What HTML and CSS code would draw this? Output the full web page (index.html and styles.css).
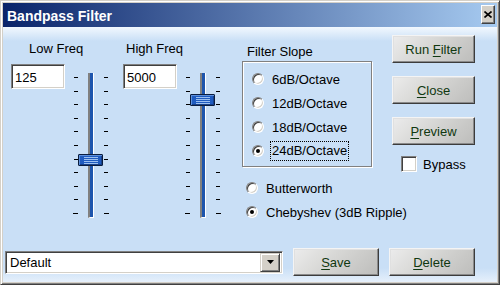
FILE: index.html
```html
<!DOCTYPE html>
<html lang="en">

<head>
    <meta charset="UTF-8">
    <meta name="viewport" content="width=device-width, initial-scale=1.0">
    <title>Bandpass Filter</title>
    <link rel="stylesheet" href="styles.css">
</head>

<body>
    <div class="window">
        <div class="titlebar">
            <span class="title">Bandpass Filter</span>
            <button class="close-btn" type="button">
                <svg width="8" height="7" viewBox="0 0 8 7">
                    <path d="M0.5 0.5 L7.5 6.5 M7.5 0.5 L0.5 6.5" stroke="#000" stroke-width="1.6" fill="none" />
                </svg>
            </button>
        </div>

        <div class="client">
            <div class="main">
                <div class="freq">
                    <div class="freq-label freq-label-low">Low Freq</div>
                    <div class="freq-row">
                        <input class="field" type="text" value="125">
                        <div class="slider">
                            <div class="ticks ticks-left">
                                <span></span><span></span><span></span><span></span><span></span><span></span>
                                <span></span><span></span><span></span><span></span><span></span>
                            </div>
                            <div class="track"></div>
                            <div class="ticks ticks-right">
                                <span></span><span></span><span></span><span></span><span></span><span></span>
                                <span></span><span></span><span></span><span></span><span></span>
                            </div>
                            <div class="thumb" style="top: 82px"></div>
                        </div>
                    </div>
                </div>

                <div class="freq">
                    <div class="freq-label freq-label-high">High Freq</div>
                    <div class="freq-row">
                        <input class="field" type="text" value="5000">
                        <div class="slider">
                            <div class="ticks ticks-left">
                                <span></span><span></span><span></span><span></span><span></span><span></span>
                                <span></span><span></span><span></span><span></span><span></span>
                            </div>
                            <div class="track"></div>
                            <div class="ticks ticks-right">
                                <span></span><span></span><span></span><span></span><span></span><span></span>
                                <span></span><span></span><span></span><span></span><span></span>
                            </div>
                            <div class="thumb" style="top: 22px"></div>
                        </div>
                    </div>
                </div>

                <div class="slope">
                    <div class="slope-label">Filter Slope</div>
                    <div class="group">
                        <div class="option"><span class="radio"></span><span>6dB/Octave</span></div>
                        <div class="option"><span class="radio"></span><span>12dB/Octave</span></div>
                        <div class="option"><span class="radio"></span><span>18dB/Octave</span></div>
                        <div class="option"><span class="radio checked"></span><span class="focused">24dB/Octave</span></div>
                    </div>
                    <div class="types">
                        <div class="option"><span class="radio"></span><span>Butterworth</span></div>
                        <div class="option"><span class="radio checked"></span><span>Chebyshev (3dB Ripple)</span></div>
                    </div>
                </div>

                <div class="actions">
                    <button class="btn" type="button">Run <u>F</u>ilter</button>
                    <button class="btn" type="button"><u>C</u>lose</button>
                    <button class="btn" type="button"><u>P</u>review</button>
                    <label class="bypass"><span class="checkbox"></span>Bypass</label>
                </div>
            </div>

            <div class="bottom">
                <div class="combo">
                    <span class="combo-text">Default</span>
                    <span class="combo-arrow">
                        <svg width="7" height="4" viewBox="0 0 7 4">
                            <path d="M0 0 H7 L3.5 4 Z" fill="#000" />
                        </svg>
                    </span>
                </div>
                <button class="btn btn-wide" type="button"><u>S</u>ave</button>
                <button class="btn btn-wide" type="button"><u>D</u>elete</button>
            </div>
        </div>
    </div>
</body>

</html>
```

FILE: styles.css
```css
* {
    padding: 0;
    margin: 0;
    box-sizing: border-box;
    font-family: "Liberation Sans", Arial, sans-serif;
}

body {
    width: 500px;
    height: 285px;
    overflow: hidden;
    background-color: #d4d0c8;
}

.window {
    display: flex;
    flex-direction: column;
    width: 500px;
    height: 285px;
    padding: 2px;
    border: 1px solid;
    border-color: #d4d0c8 #404040 #404040 #d4d0c8;
    box-shadow: inset 1px 1px #ffffff, inset -1px -1px #808080;
    background-color: #d4d0c8;
}

.titlebar {
    display: flex;
    align-items: center;
    justify-content: space-between;
    height: 24px;
    padding: 0 2px 0 4px;
    background: linear-gradient(to right, #0a246a, #a6caf0);
}

.title {
    color: #ffffff;
    font-size: 14px;
    font-weight: 700;
    margin-top: 1px;
}

.close-btn {
    display: flex;
    align-items: center;
    justify-content: center;
    width: 14px;
    height: 19px;
    margin-top: -1px;
    border: 1px solid;
    border-color: #ffffff #404040 #404040 #ffffff;
    box-shadow: inset -1px -1px #808080;
    background-color: #d4d0c8;
}

.client {
    display: flex;
    flex-direction: column;
    flex: 1;
    padding: 8px 0 6px 0;
    background: linear-gradient(to bottom, #f2f8fe 0, #c9dff6 14px, #c9dff6 calc(100% - 14px), #e6f0fb 100%);
    color: #000;
    font-size: 13px;
}

.main {
    display: flex;
    padding-left: 8px;
}

/* frequency columns */

.freq {
    width: 98px;
    margin-right: 14px;
    padding-top: 6px;
}

.freq-label {
    height: 15px;
    line-height: 15px;
    margin-bottom: 8px;
}

.freq-label-low {
    padding-left: 18px;
}

.freq-label-high {
    padding-left: 3px;
}

.freq-row {
    display: flex;
    gap: 8px;
}

.field {
    width: 54px;
    height: 25px;
    padding: 2px 3px 0;
    font-size: 13px;
    color: #000;
    background-color: #ffffff;
    border: 1px solid;
    border-color: #808080 #ffffff #ffffff #808080;
    box-shadow: inset 1px 1px #404040, inset -1px -1px #d4d0c8;
    outline: none;
}

.slider {
    position: relative;
    display: flex;
    justify-content: space-between;
    width: 36px;
    height: 146px;
    margin-top: 8px;
}

.ticks {
    display: flex;
    flex-direction: column;
    justify-content: space-between;
    width: 5px;
    padding: 5px 0 4px;
}

.ticks span {
    display: block;
    width: 4px;
    height: 1px;
    background-color: #000;
}

.ticks-left span {
    margin-left: 1px;
}

.ticks span:last-child {
    width: 5px;
    margin-left: 0;
}

.track {
    width: 6px;
    margin-top: 1px;
    border-left: 2px solid #808080;
    border-right: 1px solid #ffffff;
    border-bottom: 1px solid #ffffff;
    background-color: #1d55ad;
}

.thumb {
    position: absolute;
    left: 5px;
    width: 25px;
    height: 12px;
    border: 1px solid #0b1d3e;
    border-radius: 1px;
    background-color: #1f5bbf;
    box-shadow: inset 1px 1px #5c8fdc, inset -1px -1px #153f88;
}

.thumb::after {
    content: "";
    position: absolute;
    left: 5px;
    top: 2px;
    width: 14px;
    height: 7px;
    background: repeating-linear-gradient(to bottom, #9cc0f0 0, #9cc0f0 1px, transparent 1px, transparent 2px);
}

/* filter slope */

.slope {
    width: 130px;
    margin-left: 7px;
    padding-top: 9px;
}

.slope-label {
    height: 15px;
    line-height: 15px;
    padding-left: 5px;
    margin-bottom: 2px;
}

.group {
    height: 106px;
    padding: 5px 0 0 9px;
    border: 1px solid #808080;
    box-shadow: inset 1px 1px #ffffff, 1px 1px #ffffff;
}

.option {
    display: flex;
    align-items: center;
    gap: 8px;
    height: 24px;
    white-space: nowrap;
}

.radio {
    position: relative;
    flex-shrink: 0;
    width: 12px;
    height: 12px;
    border-radius: 50%;
    border: 1px solid;
    border-color: #808080 #ffffff #ffffff #808080;
    box-shadow: inset 1px 1px #404040, inset -1px -1px #d4d0c8;
    background-color: #ffffff;
}

.radio.checked::after {
    content: "";
    position: absolute;
    left: 3px;
    top: 3px;
    width: 4px;
    height: 4px;
    border-radius: 50%;
    background-color: #000;
}

.focused {
    padding: 1px 1px 2px;
    margin-left: -2px;
    border: 1px dotted #000;
}

.types {
    margin-top: 9px;
    padding-left: 4px;
}

/* right side buttons */

.actions {
    display: flex;
    flex-direction: column;
    gap: 13px;
    width: 83px;
    margin-left: 20px;
}

.btn {
    flex-shrink: 0;
    width: 83px;
    height: 28px;
    font-size: 13px;
    color: #103810;
    border: 1px solid;
    border-color: #f4f4f4 #3c3c3c #3c3c3c #f4f4f4;
    box-shadow: inset -1px -1px #8a8a8a, inset 1px 1px #e0e0e0;
    background: linear-gradient(135deg, #ececec 0, #d6d6d4 45%, #bdbdbb 100%);
    cursor: pointer;
}

.btn u {
    text-decoration-thickness: 1px;
    text-underline-offset: 2px;
}

.bypass {
    display: flex;
    align-items: center;
    gap: 6px;
    margin-top: -2px;
    padding-left: 9px;
}

.checkbox {
    flex-shrink: 0;
    width: 16px;
    height: 16px;
    border: 1px solid;
    border-color: #808080 #ffffff #ffffff #808080;
    box-shadow: inset 1px 1px #404040, inset -1px -1px #d4d0c8;
    background-color: #ffffff;
}

/* bottom row */

.bottom {
    display: flex;
    align-items: center;
    gap: 10px;
    margin-top: auto;
    padding-left: 2px;
}

.combo {
    display: flex;
    align-items: center;
    justify-content: space-between;
    width: 278px;
    height: 23px;
    padding: 0 2px 0 4px;
    border: 1px solid;
    border-color: #808080 #ffffff #ffffff #808080;
    box-shadow: inset 1px 1px #404040, inset -1px -1px #d4d0c8;
    background-color: #ffffff;
}

.combo-arrow {
    display: flex;
    align-items: center;
    justify-content: center;
    width: 20px;
    height: 19px;
    border: 1px solid;
    border-color: #d4d0c8 #404040 #404040 #d4d0c8;
    box-shadow: inset 1px 1px #ffffff, inset -1px -1px #808080;
    background-color: #d4d0c8;
}

.btn-wide {
    width: 86px;
}
```
